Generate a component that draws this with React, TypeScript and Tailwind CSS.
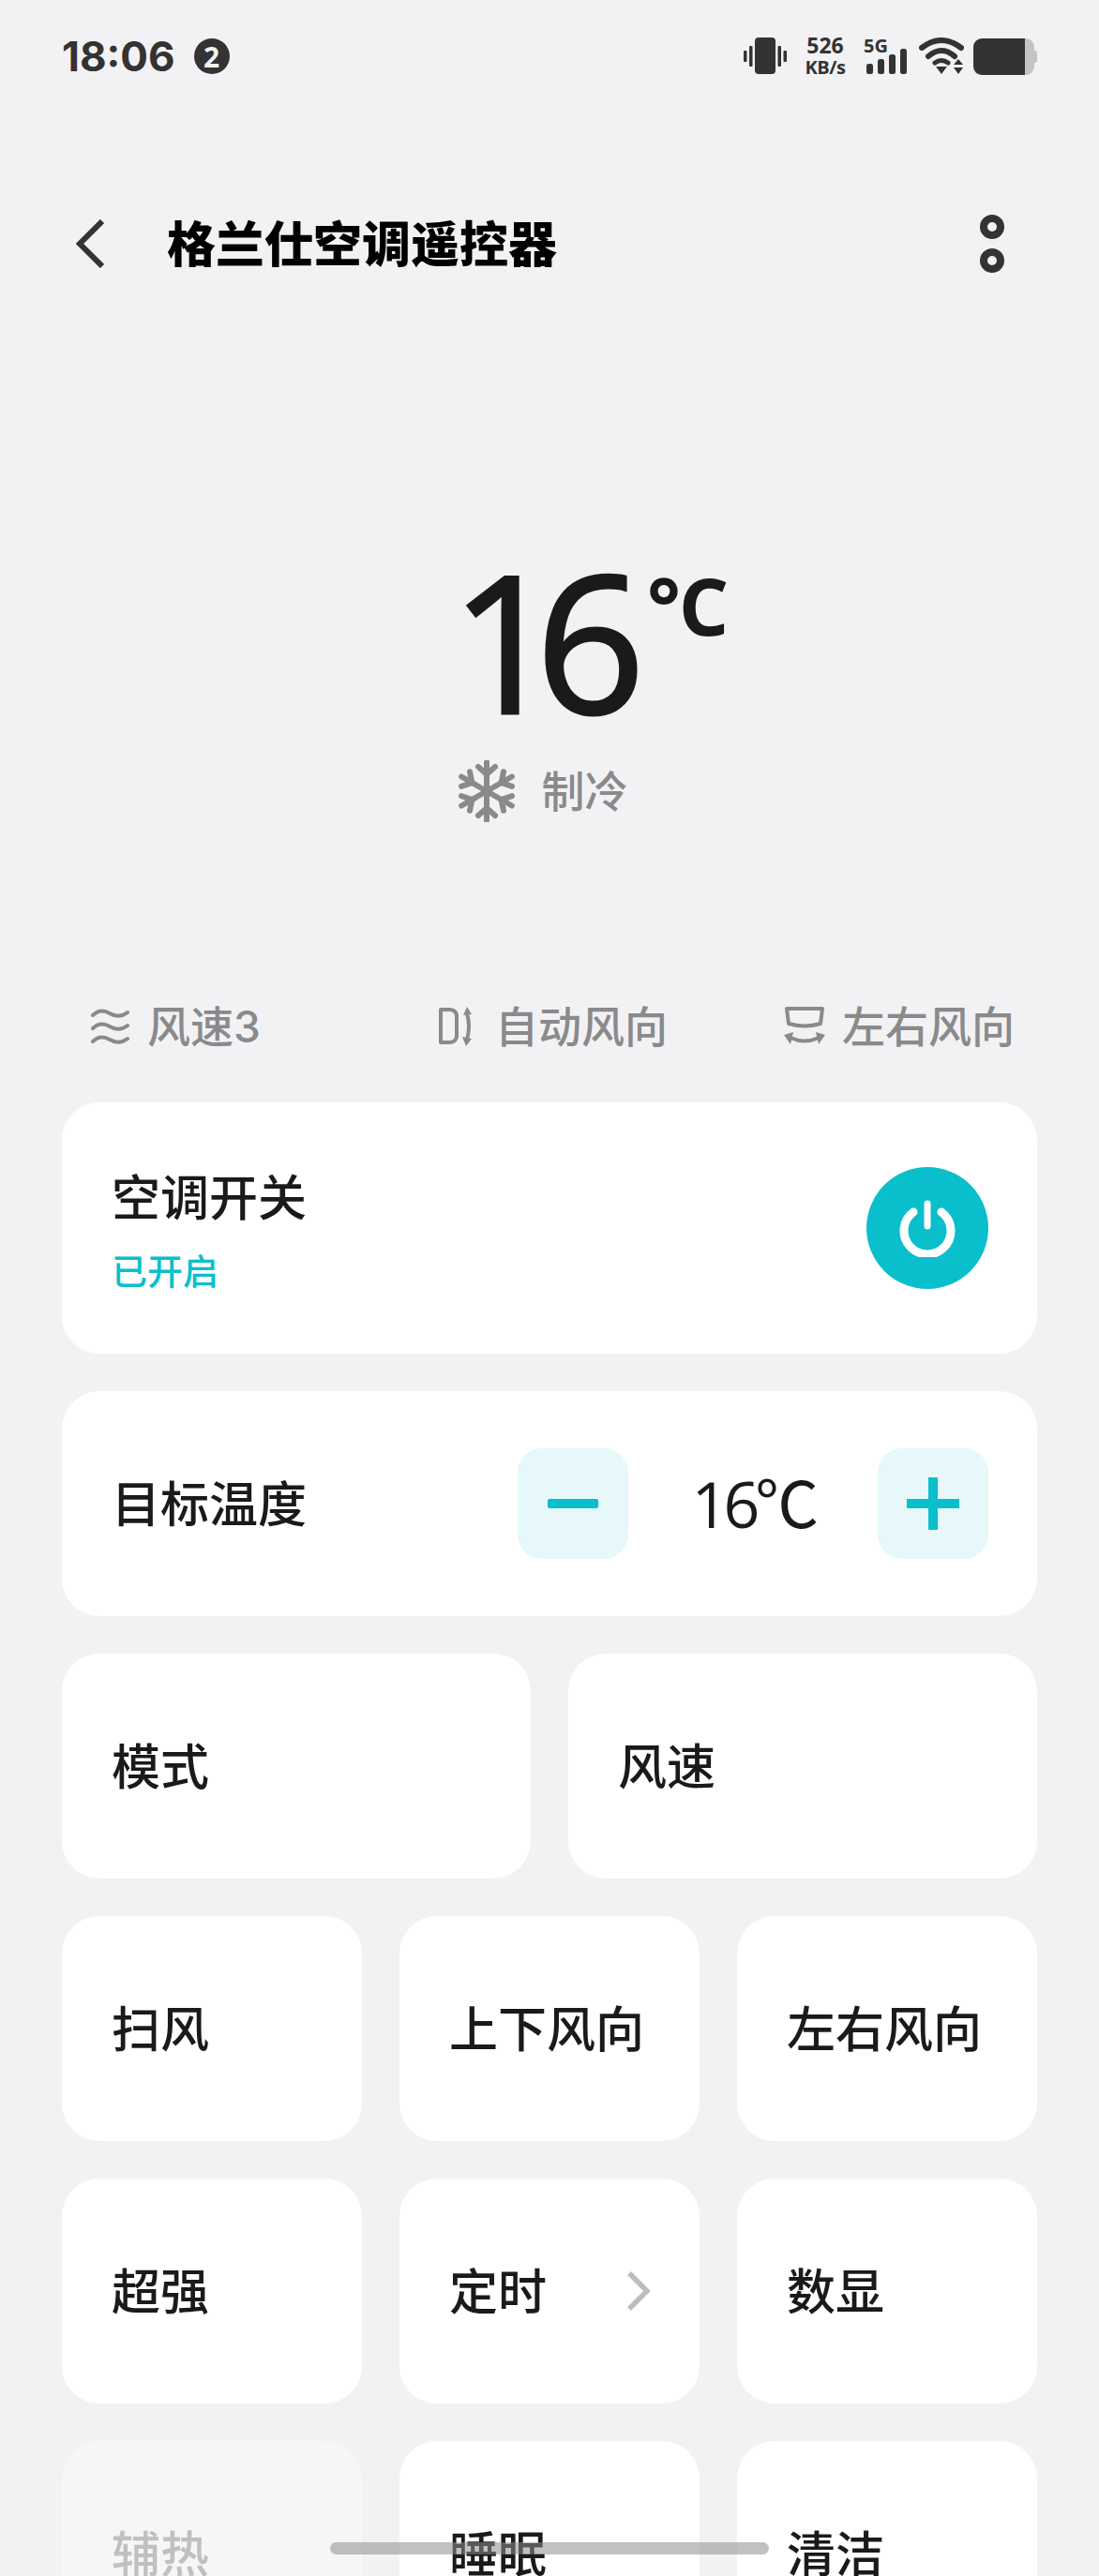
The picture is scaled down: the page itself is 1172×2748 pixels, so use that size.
const cjk = "font-['Inter','Noto_Sans_CJK_SC',sans-serif]";

function StatusIcons() {
  return (
    <div className="flex items-center text-[#333333]">
      {/* vibrate */}
      <svg width="46" height="40" viewBox="0 0 46 40" className="mr-[19px]">
        <rect x="12" y="0" width="22" height="39" rx="4" fill="#333333" />
        <rect x="0" y="14" width="3.5" height="12" rx="1" fill="#333333" />
        <rect x="6" y="9" width="3.5" height="22" rx="1" fill="#333333" />
        <rect x="36.5" y="9" width="3.5" height="22" rx="1" fill="#333333" />
        <rect x="42.5" y="14" width="3.5" height="12" rx="1" fill="#333333" />
      </svg>
      <div className="flex w-[44px] flex-col items-center font-['Open_Sans',sans-serif] font-bold leading-none">
        <span className="text-[23px] leading-[23px]">526</span>
        <span className="text-[20px] leading-[23px] tracking-[-0.5px]">KB/s</span>
      </div>
      {/* 5G signal */}
      <div className="relative ml-[19px] h-[40px] w-[47px]">
        <span className="absolute top-[-1px] left-0 font-['Open_Sans',sans-serif] text-[20px] font-bold leading-[20px]">5G</span>
        <svg width="47" height="40" viewBox="0 0 47 40" className="absolute top-0 left-0">
          <rect x="3" y="28" width="7" height="11" rx="2.5" fill="#333333" />
          <rect x="15" y="23" width="7" height="16" rx="2.5" fill="#333333" />
          <rect x="27" y="18" width="7" height="21" rx="2.5" fill="#333333" />
          <rect x="39" y="12" width="7" height="27" rx="2.5" fill="#333333" />
        </svg>
      </div>
      {/* wifi */}
      <svg width="48" height="40" viewBox="0 0 48 40" className="ml-[12px]">
        <path d="M3 11 Q24 -5 45 11" fill="none" stroke="#333333" strokeWidth="6" strokeLinecap="round" />
        <path d="M10 20 Q24 8 38 20" fill="none" stroke="#333333" strokeWidth="6" strokeLinecap="round" />
        <path d="M17 27 Q24 22 31 27" fill="none" stroke="#333333" strokeWidth="5" strokeLinecap="round" />
        <path d="M18 31 H30 L24 39 Z" fill="#333333" />
        <path d="M37 29 L42 23 L47 29 Z M37 32 H47 L42 39 Z" fill="#333333" />
      </svg>
      {/* battery */}
      <div className="ml-[10px] flex h-[39px] w-[68px] items-center">
        <div className="flex h-full w-[65px] overflow-hidden rounded-[9px]">
          <div className="w-[55px] bg-[#333333]" />
          <div className="flex-1 bg-[#c4c4c6]" />
        </div>
        <div className="h-[13px] w-[3px] rounded-r-[2px] bg-[#c4c4c6]" />
      </div>
    </div>
  );
}

function Snow() {
  return (
    <svg width="60" height="66" viewBox="-30 -33 60 66" stroke="#8a8a8c" strokeWidth="6" fill="none" strokeLinecap="round">
      {[0, 60, 120, 180, 240, 300].map((a) => (
        <g key={a} transform={`rotate(${a})`}>
          <path d="M0 0 V-31" />
          <path d="M-9 -26 L0 -18 L9 -26" />
        </g>
      ))}
    </svg>
  );
}

function WindIcon() {
  const wave = (y: number) => `M2 ${y} Q10 ${y - 8} 20 ${y - 2} T39 ${y - 3}`;
  return (
    <svg width="41" height="42" viewBox="0 0 41 42" fill="none" stroke="#8a8a8c" strokeWidth="4" strokeLinecap="round">
      <path d={wave(9)} />
      <path d={wave(23)} />
      <path d={wave(37)} />
    </svg>
  );
}

function AutoIcon() {
  return (
    <svg width="42" height="42" viewBox="0 0 42 42" fill="none" stroke="#8a8a8c" strokeWidth="4" strokeLinejoin="round">
      <path d="M2 3 H12 Q19 4 19 10 V31 Q19 37 12 38 H2 Z" />
      <path d="M30 7 Q34 21 30 35" />
      <path d="M26 9 L30 0 L35 8 Z M25 32 L35 34 L29 42 Z" fill="#8a8a8c" stroke="none" />
    </svg>
  );
}

function SideIcon() {
  return (
    <svg width="44" height="42" viewBox="0 0 44 42" fill="none" stroke="#8a8a8c" strokeWidth="4" strokeLinejoin="round">
      <path d="M3 2 H41 L39 18 Q22 23 5 18 Z" />
      <path d="M7 33 Q22 40 37 33" />
      <path d="M0 30 L10 27 L7 40 Z M44 30 L34 27 L37 40 Z" fill="#8a8a8c" stroke="none" />
    </svg>
  );
}

function Tile({ label, disabled, arrow }: { label: string; disabled?: boolean; arrow?: boolean }) {
  return (
    <div className={`flex h-[240px] items-center justify-between rounded-[40px] pr-[52px] pl-[53px] ${disabled ? "bg-[#f6f6f8] text-[#c0c0c2]" : "bg-white text-[#1a1a1a]"}`}>
      <span className="pt-[3px] text-[52px] leading-none font-medium">{label}</span>
      {arrow && (
        <svg width="26" height="42" viewBox="0 0 26 42" fill="none" stroke="#bdbdbd" strokeWidth="5.5">
          <path d="M3 2 L22 21 L3 40" />
        </svg>
      )}
    </div>
  );
}

export default function App() {
  return (
    <div className={`relative h-[2748px] w-[1172px] overflow-hidden bg-[#f2f2f4] text-[#1a1a1a] ${cjk}`}>
      {/* Status bar */}
      <div className="flex h-[120px] items-center justify-between pr-[66px] pl-[66px]">
        <div className="flex items-center gap-[20px] text-[#333333]">
          <span className="font-['Inter',sans-serif] text-[44px] leading-none font-bold">18:06</span>
          <span className="flex h-[38px] w-[38px] items-center justify-center rounded-full bg-[#333333] font-['Open_Sans',sans-serif] text-[30px] font-bold text-[#f2f2f4]">2</span>
        </div>
        <StatusIcons />
      </div>

      {/* Header */}
      <div className="flex h-[280px] items-center justify-between pr-[101px] pl-[81px]">
        <div className="flex items-center gap-[67px]">
          <svg width="30" height="52" viewBox="0 0 30 52" fill="none" stroke="#333333" strokeWidth="6">
            <path d="M28 2 L4 26 L28 50" />
          </svg>
          <h1 className="pt-[3px] text-[52px] leading-none font-black text-black">格兰仕空调遥控器</h1>
        </div>
        <svg width="26" height="62" viewBox="0 0 26 62" fill="none" stroke="#333333" strokeWidth="8">
          <circle cx="13" cy="13" r="9" />
          <circle cx="13" cy="49" r="9" />
        </svg>
      </div>

      {/* Temperature */}
      <div className="flex h-[672px] flex-col items-center pt-[182px]">
        <div className="flex items-start pl-[84px] font-['Open_Sans',sans-serif] leading-none">
          <span className="text-[204px] leading-[200px] font-medium tracking-[-26px] [-webkit-text-stroke:3px_#1a1a1a]">16</span>
          <span className="mt-[22px] ml-[28px] text-[84px] leading-[84px] font-bold tracking-[-2px]">°C</span>
        </div>
        <div className="mt-[29px] flex items-center gap-[29px] pr-[14px]">
          <Snow />
          <span className="text-[46px] leading-none font-medium text-[#8a8a8c]">制冷</span>
        </div>
      </div>

      {/* Quick states */}
      <div className="grid grid-cols-[371px_368px_1fr] pl-[97px] text-[46px] leading-none font-medium text-[#8a8a8c]">
        <div className="flex items-center gap-[19px]"><WindIcon />风速3</div>
        <div className="flex items-center gap-[18px]"><AutoIcon />自动风向</div>
        <div className="flex items-center gap-[18px]"><SideIcon />左右风向</div>
      </div>

      <div className="mt-[58px] flex flex-col gap-[40px] px-[66px]">
        <div className="flex h-[268px] items-center justify-between rounded-[40px] bg-white pr-[52px] pl-[53px]">
          <div className="pt-[8px]">
            <div className="text-[52px] leading-none font-medium">空调开关</div>
            <div className="mt-[32px] text-[38px] leading-none font-medium text-[#0abfcc]">已开启</div>
          </div>
          <div className="flex h-[130px] w-[130px] items-center justify-center rounded-full bg-[#0abfcc]">
            <svg width="60" height="62" viewBox="0 0 60 62" fill="none" stroke="white" strokeWidth="9" strokeLinecap="round">
              <path d="M15 14 A25 25 0 1 0 45 14" />
              <path d="M30 5 V29" strokeWidth="7" />
            </svg>
          </div>
        </div>

        <div className="flex h-[240px] items-center justify-between rounded-[40px] bg-white pr-[52px] pl-[53px]">
          <span className="pt-[4px] text-[52px] leading-none font-medium">目标温度</span>
          <div className="flex items-center">
            <div className="flex h-[118px] w-[118px] items-center justify-center rounded-[26px] bg-[#e6f8f9]">
              <div className="h-[10px] w-[54px] rounded-[2px] bg-[#0abfcc]" />
            </div>
            <span className="w-[266px] text-center font-['Open_Sans','Noto_Sans_CJK_SC',sans-serif] text-[68px] leading-none tracking-[-5px]">16℃</span>
            <div className="flex h-[118px] w-[118px] items-center justify-center rounded-[26px] bg-[#e6f8f9]">
              <svg width="56" height="56" viewBox="0 0 56 56" stroke="#0abfcc" strokeWidth="10">
                <path d="M0 28 H56 M28 0 V56" />
              </svg>
            </div>
          </div>
        </div>

        <div className="grid grid-cols-2 gap-[40px]">
          <Tile label="模式" />
          <Tile label="风速" />
        </div>

        <div className="grid grid-cols-3 gap-[40px]">
          <Tile label="扫风" />
          <Tile label="上下风向" />
          <Tile label="左右风向" />
          <Tile label="超强" />
          <Tile label="定时" arrow />
          <Tile label="数显" />
          <Tile label="辅热" disabled />
          <Tile label="睡眠" />
          <Tile label="清洁" />
        </div>
      </div>

      {/* Home indicator */}
      <div className="absolute top-[2712px] left-[352px] h-[13px] w-[468px] rounded-full bg-[#8e8e90]/55" />
    </div>
  );
}
